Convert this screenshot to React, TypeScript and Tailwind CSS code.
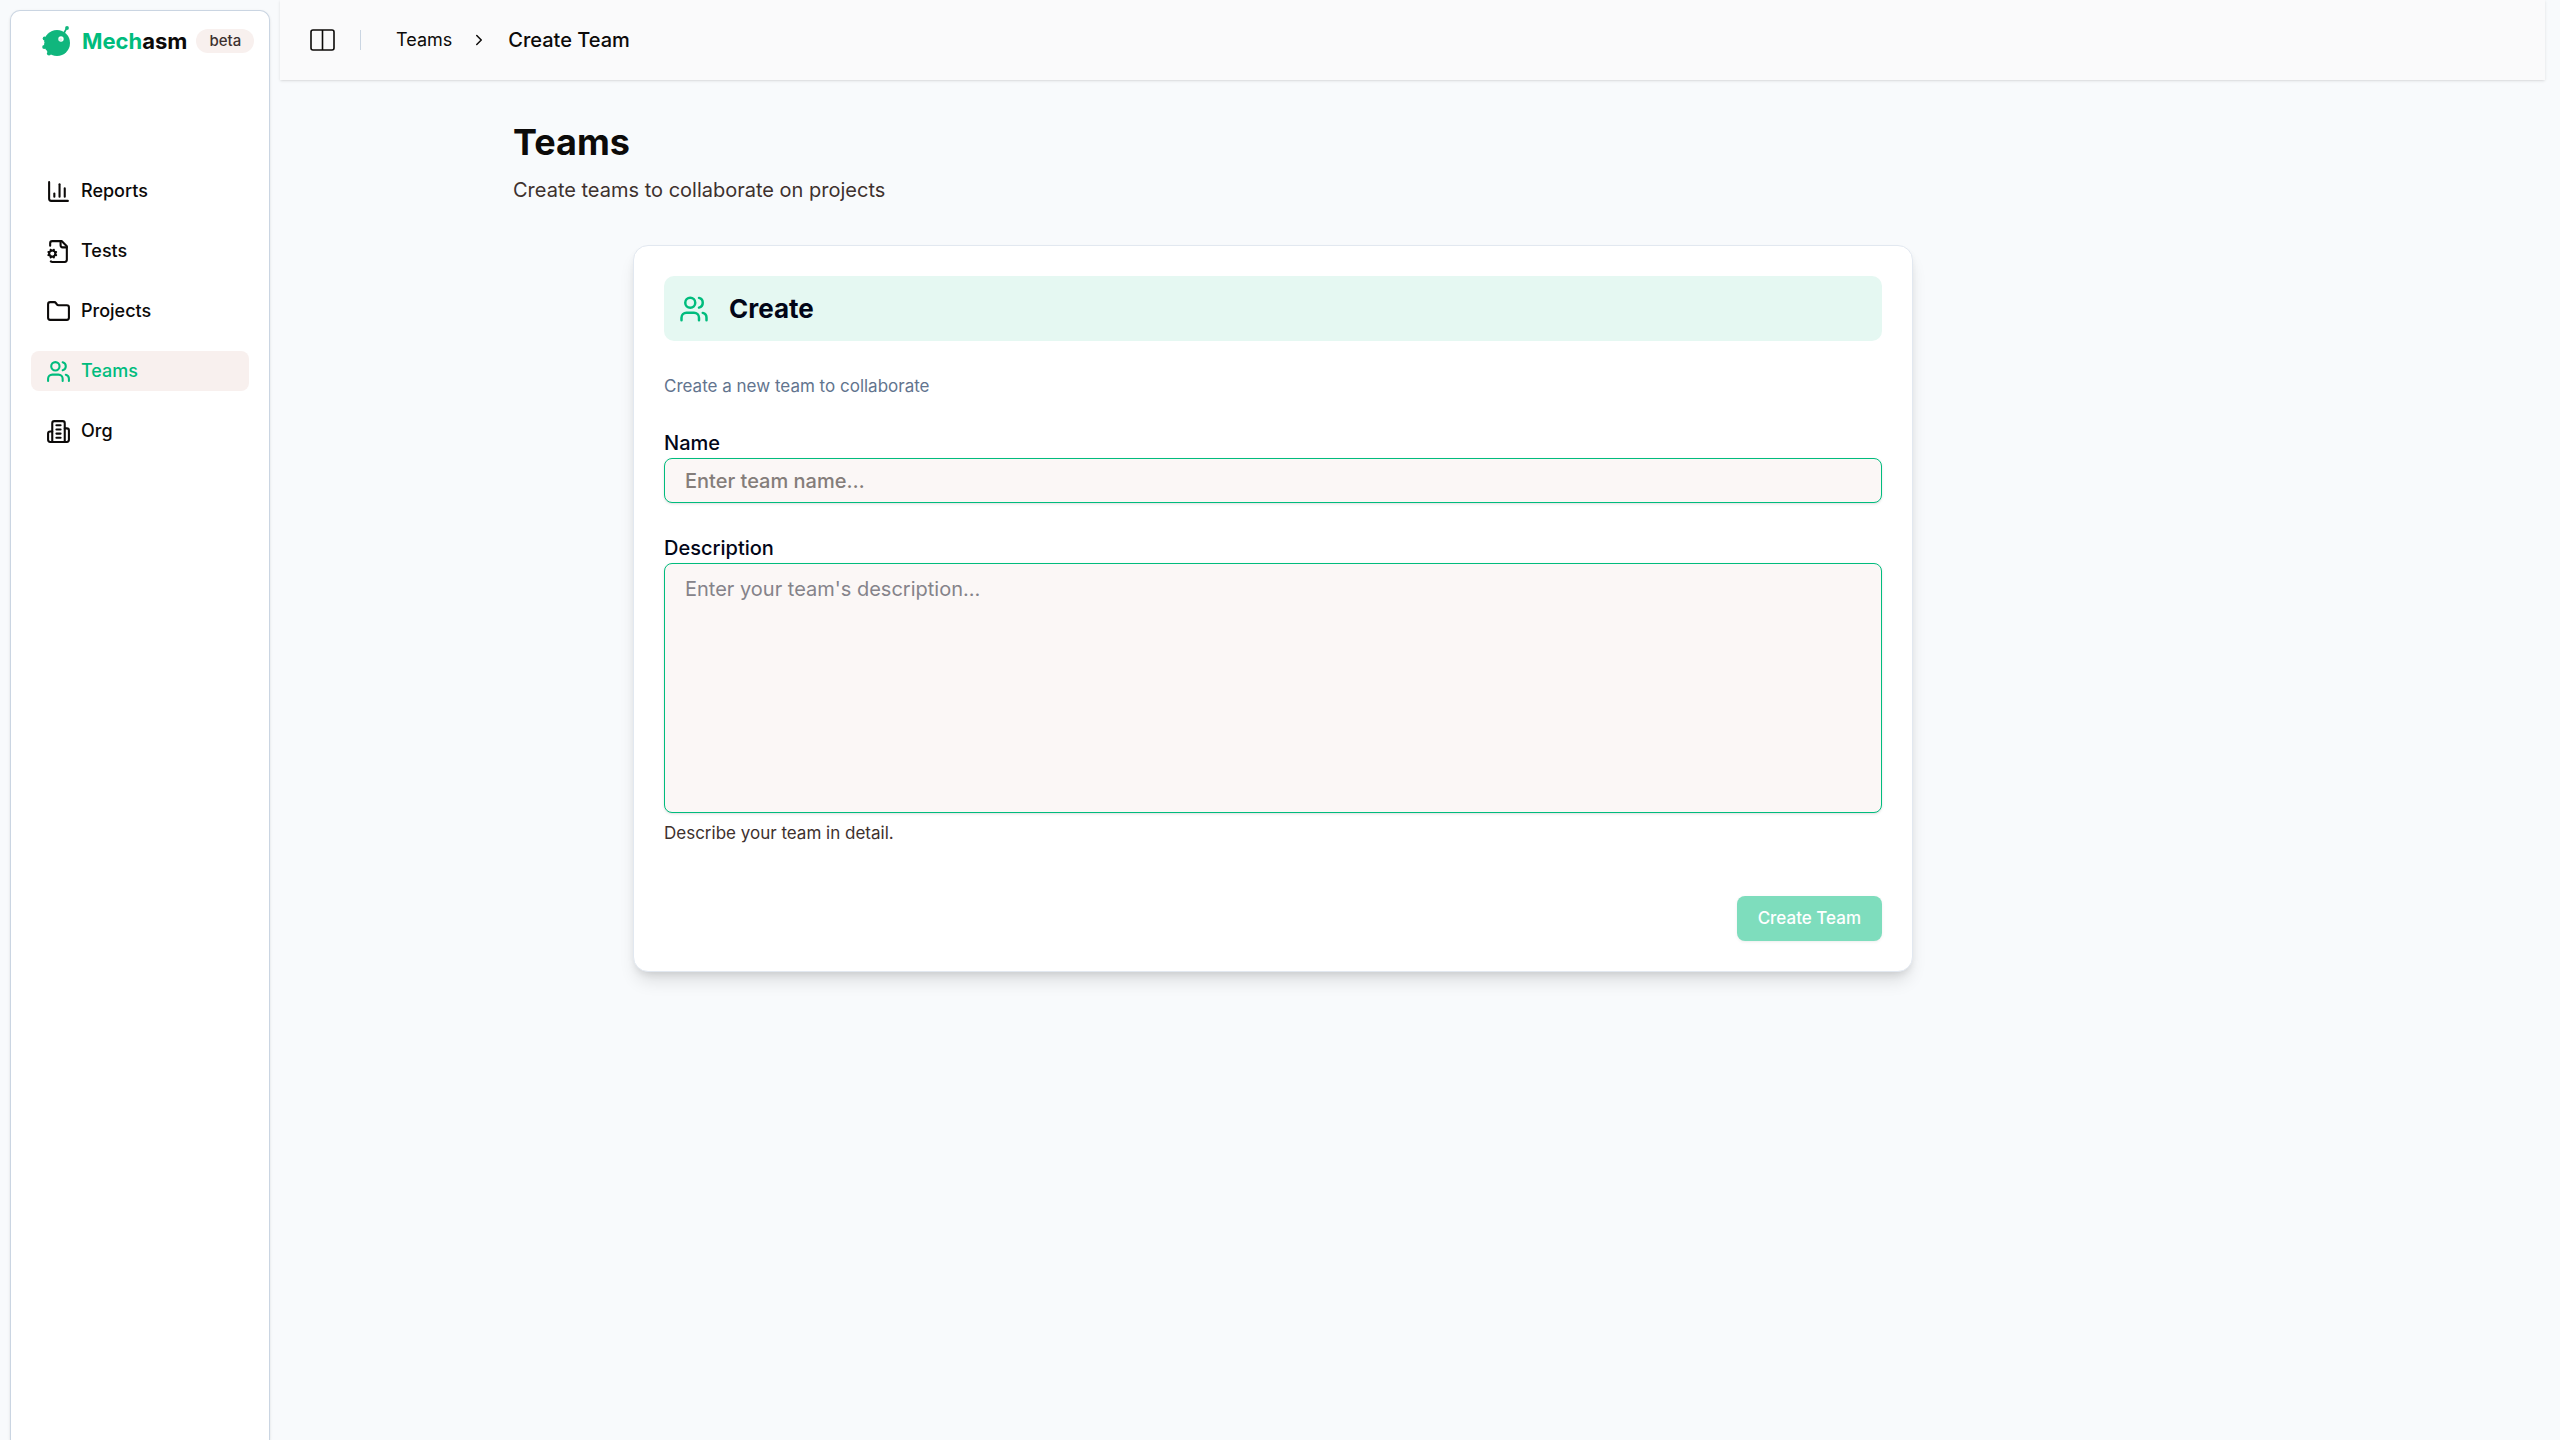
import React from "react";
import { ChevronRight, Folder, Users } from "lucide-react";

type IconProps = { className?: string };

function ChartIcon({ className }: IconProps) {
  return (
    <svg viewBox="0 0 24 24" fill="none" stroke="currentColor" strokeWidth="2" strokeLinecap="round" strokeLinejoin="round" className={className} aria-hidden="true">
      <path d="M3 3v16a2 2 0 0 0 2 2h16" />
      <path d="M18 17V9" />
      <path d="M13 17V5" />
      <path d="M8 17v-3" />
    </svg>
  );
}

function TestsIcon({ className }: IconProps) {
  return (
    <svg viewBox="0 0 24 24" fill="none" stroke="currentColor" strokeWidth="2" strokeLinecap="round" strokeLinejoin="round" className={className} aria-hidden="true">
      <path d="M14 2v4a2 2 0 0 0 2 2h4" />
      <path d="m3.2 12.9-.9-.4" />
      <path d="m3.2 15.1-.9.4" />
      <path d="M4.677 21.5a2 2 0 0 0 1.313.5H18a2 2 0 0 0 2-2V7l-5-5H6a2 2 0 0 0-2 2v2.5" />
      <path d="m4.9 11.2-.4-.9" />
      <path d="m4.9 16.8-.4.9" />
      <path d="m7.5 10.3-.4.9" />
      <path d="m7.5 17.7-.4-.9" />
      <path d="m9.7 12.5-.9.4" />
      <path d="m9.7 15.5-.9-.4" />
      <circle cx="6" cy="14" r="3" />
    </svg>
  );
}

function OrgIcon({ className }: IconProps) {
  return (
    <svg viewBox="0 0 24 24" fill="none" stroke="currentColor" strokeWidth="2" strokeLinecap="round" strokeLinejoin="round" className={className} aria-hidden="true">
      <path d="M6 22V4a2 2 0 0 1 2-2h8a2 2 0 0 1 2 2v18Z" />
      <path d="M6 12H4a2 2 0 0 0-2 2v6a2 2 0 0 0 2 2h2" />
      <path d="M18 9h2a2 2 0 0 1 2 2v9a2 2 0 0 1-2 2h-2" />
      <path d="M10 6h4" />
      <path d="M10 10h4" />
      <path d="M10 14h4" />
      <path d="M10 18h4" />
    </svg>
  );
}

function Logo() {
  return (
    <svg viewBox="0 0 28 30" className="h-[30px] w-7 shrink-0 text-[#10b67d]" aria-hidden="true">
      <circle cx="15" cy="17" r="13" fill="currentColor" />
      <path d="M22 7l2.4-4.4" stroke="currentColor" strokeWidth="1.7" />
      <circle cx="25" cy="2" r="1.9" fill="currentColor" />
      <circle cx="2.6" cy="12.5" r="1.9" fill="currentColor" />
      <circle cx="2.2" cy="21" r="2" fill="currentColor" />
      <circle cx="7" cy="27.4" r="2.1" fill="currentColor" />
      <circle cx="1.4" cy="16.8" r="1.1" fill="#fff" />
      <circle cx="3.6" cy="25" r="1" fill="#fff" />
      <circle cx="19" cy="13" r="2.7" fill="#fff" />
      <circle cx="18.6" cy="13.4" r="1.5" fill="#d5f3e8" />
    </svg>
  );
}

const navItems = [
  { label: "Reports", Icon: ChartIcon, active: false },
  { label: "Tests", Icon: TestsIcon, active: false },
  { label: "Projects", Icon: Folder, active: false },
  { label: "Teams", Icon: Users, active: true },
  { label: "Org", Icon: OrgIcon, active: false },
];

function Sidebar() {
  return (
    <div className="flex w-[280px] shrink-0 px-[10px] pt-[10px]">
      <aside className="w-full rounded-t-[10px] border border-b-0 border-slate-300 bg-white shadow-sm">
        <div className="flex h-[60px] items-center pl-[31px]">
          <a href="#" className="flex items-center text-[22px] leading-8 font-bold">
            <Logo />
            <span className="ml-3 text-[#00bc7d]">Mech</span>
            <span>asm</span>
          </a>
          <span className="ml-[9px] rounded-full bg-[#f8f0ee] px-[13px] text-[15px] leading-6 font-medium text-[#3e312e]">
            beta
          </span>
        </div>
        <nav className="mt-[100px] flex flex-col gap-5 px-5">
          {navItems.map(({ label, Icon, active }) => (
            <a
              key={label}
              href="#"
              aria-current={active ? "page" : undefined}
              className={
                active
                  ? "flex h-10 items-center gap-[10px] rounded-lg bg-[#f8f0ee] px-[15px] text-lg font-medium text-[#00bc7d]"
                  : "flex h-10 items-center gap-[10px] rounded-lg px-[15px] text-lg font-medium"
              }
            >
              <Icon className="size-[25px] shrink-0" />
              {label}
            </a>
          ))}
        </nav>
      </aside>
    </div>
  );
}

function Header() {
  return (
    <header className="flex h-20 items-center bg-[#fafafb] pl-[30px] shadow-sm">
      <button type="button" aria-label="Toggle sidebar">
        <svg viewBox="0 0 25 22" className="h-[22px] w-[25px]" fill="none" stroke="currentColor" aria-hidden="true">
          <rect x="1" y="1" width="23" height="20" rx="2" strokeWidth="1.6" />
          <path d="M12.5 1v20" strokeWidth="1.6" />
        </svg>
      </button>
      <div className="ml-[25px] h-5 w-px bg-slate-300" />
      <nav aria-label="Breadcrumb" className="ml-[35px] flex items-center">
        <a href="#" className="text-lg">Teams</a>
        <ChevronRight className="mr-5 ml-[18px] size-[18px]" aria-hidden="true" />
        <span className="text-xl font-medium" aria-current="page">Create Team</span>
      </nav>
    </header>
  );
}

function CreateTeamCard() {
  return (
    <form
      onSubmit={(e) => e.preventDefault()}
      className="mx-auto mt-10 w-full max-w-[1280px] rounded-[15px] border border-slate-200 bg-white p-[30px] text-[#020618] shadow-[0_12px_18px_-4px_rgba(0,0,0,0.12),0_4px_8px_-3px_rgba(0,0,0,0.12)]"
    >
      <div className="flex h-[65px] items-center rounded-[10px] bg-[#e5f8f2] px-[15px]">
        <Users className="size-[30px] text-[#00bc7d]" aria-hidden="true" />
        <h2 className="ml-5 text-[26px] leading-8 font-bold">Create</h2>
      </div>
      <p className="mt-[30px] text-[17px] leading-[30px] text-[#62748e]">Create a new team to collaborate</p>
      <div className="mt-[27px] flex flex-col">
        <label htmlFor="team-name" className="text-xl leading-[30px] font-medium">Name</label>
        <input
          id="team-name"
          type="text"
          placeholder="Enter team name…"
          className="h-[45px] w-full rounded-[8px] border border-[#00bc7d] bg-[#fbf7f6] px-5 text-xl font-medium shadow-sm outline-none placeholder:text-[#847d7a]"
        />
      </div>
      <div className="mt-[30px] flex flex-col">
        <label htmlFor="team-description" className="text-xl leading-[30px] font-medium">Description</label>
        <textarea
          id="team-description"
          placeholder="Enter your team's description…"
          className="h-[250px] w-full resize-none rounded-[8px] border border-[#00bc7d] bg-[#fbf7f6] px-5 py-[10px] text-xl leading-[30px] shadow-sm outline-none placeholder:text-[#85838a]"
        />
        <p className="mt-[5px] text-[17px] leading-[30px] text-[#3e312e]">Describe your team in detail.</p>
      </div>
      <div className="mt-12 flex justify-end">
        <button
          type="submit"
          disabled
          className="h-[45px] rounded-[8px] bg-[#00bc7d] px-[21px] text-[17px] font-medium text-white opacity-50 shadow-sm"
        >
          Create Team
        </button>
      </div>
    </form>
  );
}

export default function App() {
  return (
    <div className="flex min-h-screen bg-slate-50 font-['Inter',sans-serif] text-[#0c0a09]">
      <Sidebar />
      <div className="min-w-0 flex-1 pr-[15px]">
        <Header />
        <main className="pr-[279px] pb-10">
          <div className="mx-auto max-w-[1520px] pt-10">
            <h1 className="text-4xl leading-[45px] font-bold">Teams</h1>
            <p className="mt-[10px] text-xl leading-[30px] text-[#3e312e]">Create teams to collaborate on projects</p>
            <CreateTeamCard />
          </div>
        </main>
      </div>
    </div>
  );
}
